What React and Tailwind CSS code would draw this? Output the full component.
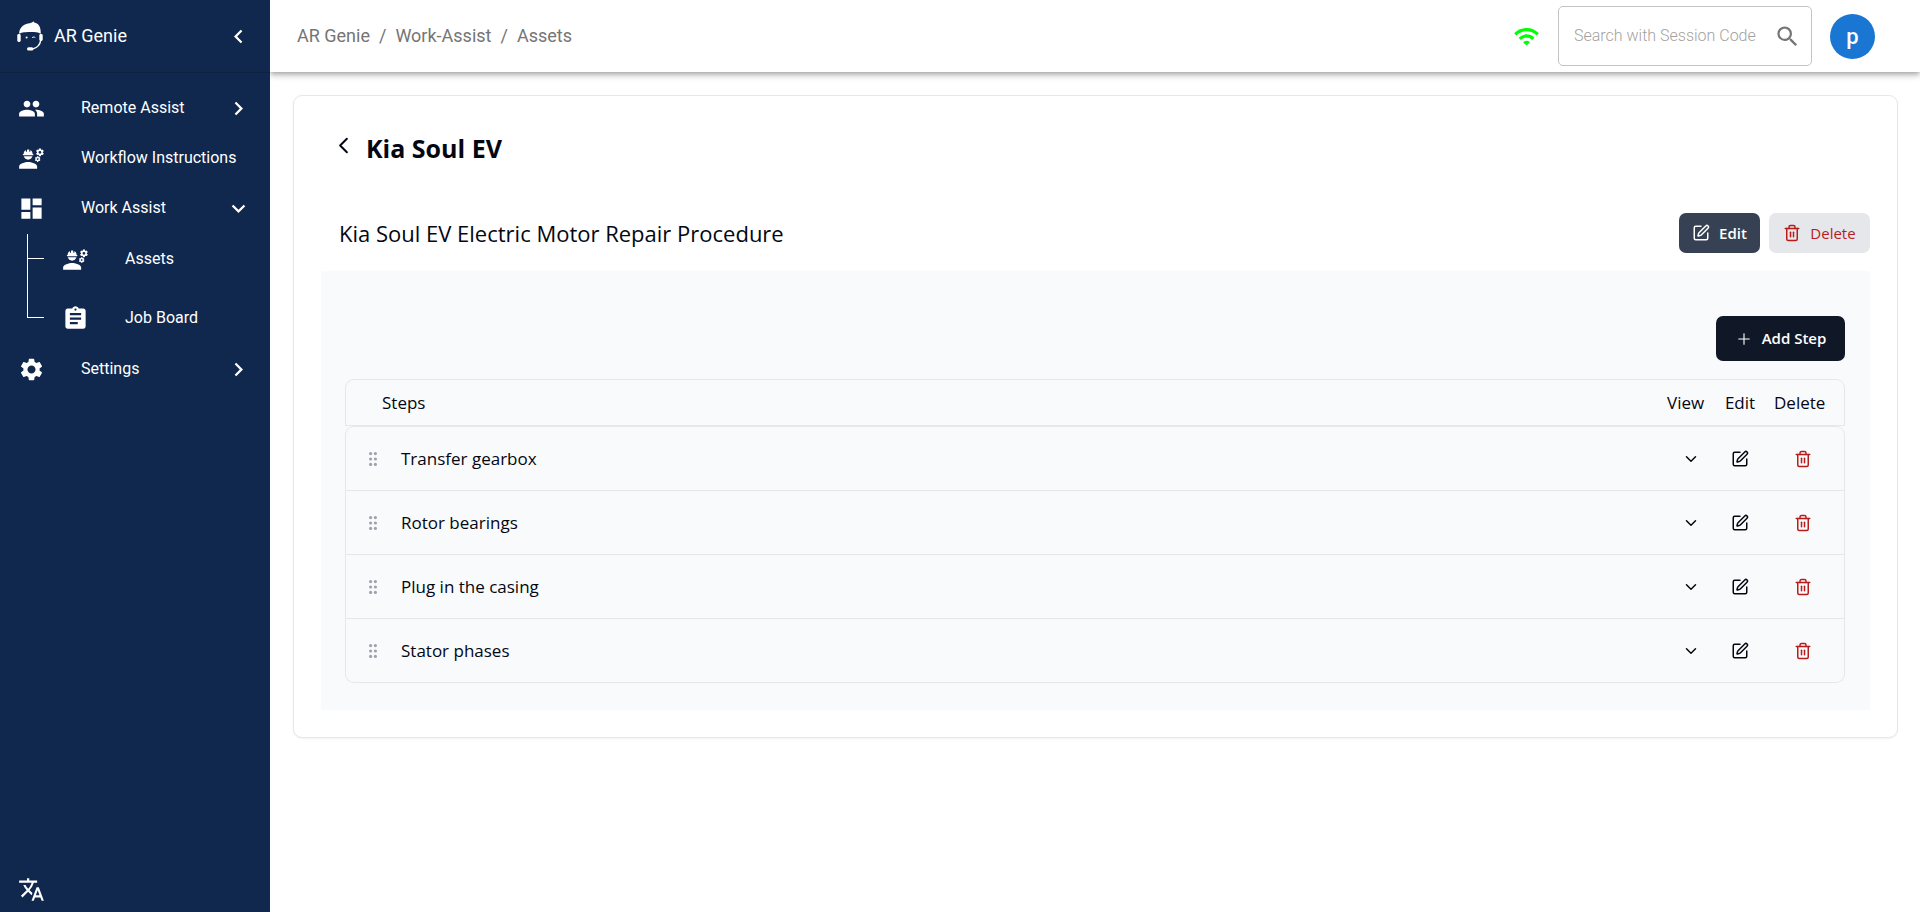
import React from "react";
import {
  MdPeople,
  MdEngineering,
  MdDashboard,
  MdAssignment,
  MdSettings,
  MdTranslate,
  MdChevronLeft,
  MdChevronRight,
  MdExpandMore,
  MdSearch,
  MdWifi,
} from "react-icons/md";
import { SquarePen, Trash2, Plus, ChevronDown, ChevronLeft } from "lucide-react";

const steps = ["Transfer gearbox", "Rotor bearings", "Plug in the casing", "Stator phases"];

function Logo() {
  return (
    <svg viewBox="0 0 26 30" className="h-[30px] w-[26px] shrink-0" fill="none" aria-hidden="true">
      <path
        d="M2.200 13C2 7.500 6 3.600 11 2.600C13.500 2.200 15.200 1.600 16.500 0.200C17 1.200 17.600 1.700 18.800 2C22 2.900 24 6.500 23.800 13C22.500 11.600 20 10.900 13 10.900C6.500 10.900 3.600 11.600 2.200 13Z"
        fill="#fff"
      />
      <rect x="0.300" y="13" width="3.400" height="8" rx="1.400" fill="#fff" />
      <rect x="22.300" y="13" width="3.400" height="7" rx="1.400" fill="#fff" />
      <path d="M23.800 19C23 24 20 27 15.500 28" stroke="#fff" strokeWidth="1.500" />
      <rect x="10" y="26.300" width="6.400" height="3.200" rx="1.600" fill="#fff" />
      <circle cx="9.600" cy="16.600" r="1" fill="#fff" />
      <path d="M15 16.800C16 15.800 17.500 15.800 18.300 16.600" stroke="#fff" strokeWidth="1" />
    </svg>
  );
}

function Grip() {
  return (
    <svg viewBox="0 0 18 18" className="size-[18px]" fill="#9ca3af" aria-hidden="true">
      {[3.6, 9, 14.4].map((y) => (
        <g key={y}>
          <circle cx="6.600" cy={y} r="1.600" />
          <circle cx="11.400" cy={y} r="1.600" />
        </g>
      ))}
    </svg>
  );
}

function NavItem({ icon: Icon, label, end: End }) {
  return (
    <a href="#" className="flex h-[50px] items-center px-[18px]">
      <Icon className="size-[27px] shrink-0" />
      <span className="ml-9 flex-1 whitespace-nowrap">{label}</span>
      {End && <End className="size-[27px] shrink-0" />}
    </a>
  );
}

function SubItem({ icon: Icon, label, last }) {
  return (
    <li className={last ? "flex h-[68px] items-center" : "flex h-[50px] items-center"}>
      <span className={last ? "flex h-full w-[17px] flex-col" : "flex h-full w-[17px] flex-col border-l border-white"}>
        <span className={last ? "h-1/2 border-b border-l border-white" : "h-1/2 border-b border-white"} />
      </span>
      <a href="#" className="flex flex-1 items-center pl-[18px]">
        <Icon className="size-[27px] shrink-0" />
        <span className="ml-9">{label}</span>
      </a>
    </li>
  );
}

function Sidebar() {
  return (
    <aside className="z-20 flex w-[270px] shrink-0 flex-col bg-[#10274e] font-['Roboto',sans-serif] text-base text-white">
      <div className="flex h-[73px] items-center border-b border-[#0e2140] pr-[18px] pl-[17px]">
        <Logo />
        <span className="ml-[11px] flex-1 text-lg">AR Genie</span>
        <button type="button" aria-label="Collapse menu">
          <MdChevronLeft className="size-[27px]" />
        </button>
      </div>
      <nav className="pt-[10px]" aria-label="Main">
        <NavItem icon={MdPeople} label="Remote Assist" end={MdChevronRight} />
        <NavItem icon={MdEngineering} label="Workflow Instructions" />
        <NavItem icon={MdDashboard} label="Work Assist" end={MdExpandMore} />
        <ul className="mt-px pl-[27px]">
          <SubItem icon={MdEngineering} label="Assets" />
          <SubItem icon={MdAssignment} label="Job Board" last />
        </ul>
        <div className="-mt-2">
          <NavItem icon={MdSettings} label="Settings" end={MdChevronRight} />
        </div>
      </nav>
      <button type="button" aria-label="Change language" className="mt-auto mb-[9px] ml-[18px] self-start">
        <MdTranslate className="size-[27px]" />
      </button>
    </aside>
  );
}

function TopBar() {
  return (
    <header className="z-10 flex h-[72px] shrink-0 items-center bg-white pr-[45px] pl-[27px] font-['Roboto',sans-serif] shadow-[0_2px_4px_-1px_rgba(0,0,0,0.2),0_4px_5px_0_rgba(0,0,0,0.14),0_1px_10px_0_rgba(0,0,0,0.12)]">
      <nav aria-label="Breadcrumb" className="flex-1">
        <ol className="flex gap-[9px] text-lg text-[#757575]">
          <li><a href="#">AR Genie</a></li>
          <li aria-hidden="true">/</li>
          <li><a href="#">Work-Assist</a></li>
          <li aria-hidden="true">/</li>
          <li><a href="#">Assets</a></li>
        </ol>
      </nav>
      <MdWifi className="size-[27px] text-[#00ff00]" />
      <div className="ml-[18px] flex h-[60px] w-[254px] items-center justify-between rounded-[5px] border border-[#c4c4c4] pr-[10px] pl-[15px]">
        <input
          type="text"
          aria-label="Search with Session Code"
          placeholder="Search with Session Code"
          className="w-[182px] bg-transparent text-base font-light outline-none placeholder:text-[#a2a2a2]"
        />
        <button type="button" aria-label="Search" className="text-[#757575]">
          <MdSearch className="size-[27px]" />
        </button>
      </div>
      <button type="button" className="ml-[18px] size-[45px] rounded-full bg-[#1976d2] text-[22px] font-medium text-white">
        p
      </button>
    </header>
  );
}

function StepsTable() {
  return (
    <table className="mt-[18px] w-full table-fixed border-separate border-spacing-0 text-[17px] font-medium">
      <colgroup>
        <col className="w-[56px]" />
        <col />
        <col className="w-[48px]" />
        <col className="w-[50px]" />
        <col className="w-[80px]" />
      </colgroup>
      <thead>
        <tr className="h-[47px] text-left *:border-y *:border-gray-200 *:font-medium">
          <th colSpan={2} className="rounded-tl-[9px] border-l pl-9">Steps</th>
          <th>View</th>
          <th className="text-center">Edit</th>
          <th className="rounded-tr-[9px] border-r pl-[9px]">Delete</th>
        </tr>
      </thead>
      <tbody>
        {steps.map((step, i) => {
          const first = i === 0;
          const last = i === steps.length - 1;
          return (
            <tr
              key={step}
              className={
                first
                  ? "h-[65px] *:border-y *:border-gray-200"
                  : "h-[64px] *:border-b *:border-gray-200"
              }
            >
              <td className={first ? "rounded-tl-[9px] border-l pl-[18px]" : last ? "rounded-bl-[9px] border-l pl-[18px]" : "border-l pl-[18px]"}>
                <button type="button" aria-label={`Move ${step}`} className="block">
                  <Grip />
                </button>
              </td>
              <td>{step}</td>
              <td>
                <button type="button" aria-label={`View ${step}`} className="mx-auto block">
                  <ChevronDown className="size-[18px]" strokeWidth={2} />
                </button>
              </td>
              <td>
                <button type="button" aria-label={`Edit ${step}`} className="mx-auto block">
                  <SquarePen className="size-[18px]" strokeWidth={2} />
                </button>
              </td>
              <td className={first ? "rounded-tr-[9px] border-r pr-1" : last ? "rounded-br-[9px] border-r pr-1" : "border-r pr-1"}>
                <button type="button" aria-label={`Delete ${step}`} className="mx-auto block text-[#b91c1c]">
                  <Trash2 className="size-[18px]" strokeWidth={2} />
                </button>
              </td>
            </tr>
          );
        })}
      </tbody>
    </table>
  );
}

export default function App() {
  return (
    <div className="flex min-h-screen bg-white">
      <Sidebar />
      <div className="flex min-w-0 flex-1 flex-col">
        <TopBar />
        <main className="pt-[23px] pr-[22px] pb-6 pl-[23px] font-['Open_Sans','Noto_Sans',sans-serif] text-[#030712]">
          <section className="rounded-[9px] border border-gray-200 bg-white px-[27px] pb-[27px] shadow-xs">
            <div className="flex items-center gap-[9px] pt-[34px] pl-[9px]">
              <button type="button" aria-label="Back" className="pb-1.5">
                <ChevronLeft className="size-[27px]" strokeWidth={1.75} />
              </button>
              <h1 className="text-[25px] leading-9 font-bold">Kia Soul EV</h1>
            </div>
            <div className="mt-[47px] flex items-center gap-[9px] pl-[18px]">
              <h2 className="flex-1 text-[22px] font-medium">Kia Soul EV Electric Motor Repair Procedure</h2>
              <button type="button" className="flex h-10 w-[81px] items-center justify-center gap-[9px] rounded-[7px] bg-gray-700 text-[15px] font-semibold text-white">
                <SquarePen className="size-[18px]" strokeWidth={2} />
                Edit
              </button>
              <button type="button" className="flex h-10 w-[101px] items-center justify-center gap-[9px] rounded-[7px] bg-gray-200 text-[15px] font-medium text-[#b91c1c]">
                <Trash2 className="size-[18px]" strokeWidth={2} />
                Delete
              </button>
            </div>
            <div className="mt-[18px] rounded-[2px] bg-gray-50 pt-[45px] pr-[25px] pb-[27px] pl-6">
              <button type="button" className="ml-auto flex h-[45px] w-[129px] items-center justify-center gap-[9px] rounded-[7px] bg-gray-900 text-[15px] font-semibold text-white">
                <Plus className="size-[18px]" strokeWidth={1.5} />
                Add Step
              </button>
              <StepsTable />
            </div>
          </section>
        </main>
      </div>
    </div>
  );
}
